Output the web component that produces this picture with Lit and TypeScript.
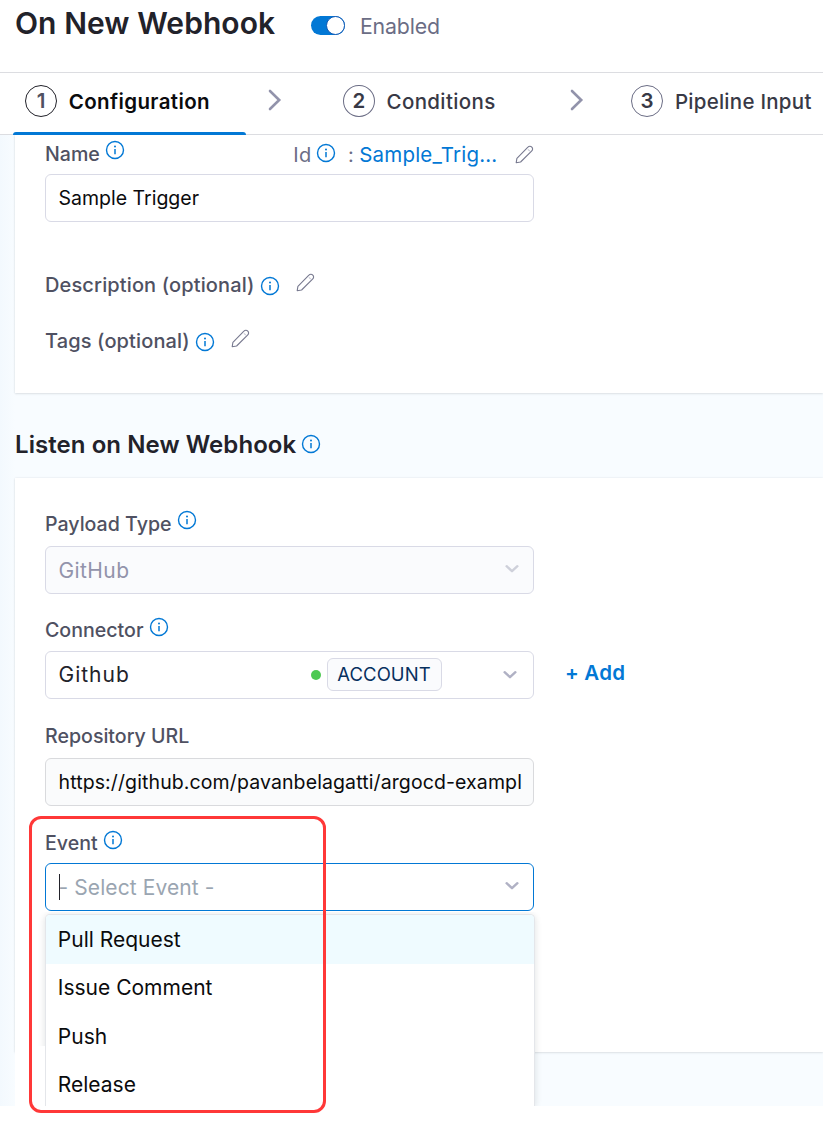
import { LitElement, html, css, svg } from "lit";
import { customElement, property } from "lit/decorators.js";
import { classMap } from "lit/directives/class-map.js";

@customElement("info-icon")
class InfoIcon extends LitElement {
  static styles = css`
    :host { display: block; flex: none; width: 20px; height: 20px; }
    svg { display: block; }
  `;
  render() {
    return html`<svg width="20" height="20" viewBox="0 0 20 20" fill="none">
      <circle cx="10" cy="10" r="8.5" stroke="#0278d5" stroke-width="1.4" />
      <circle cx="10" cy="6.5" r="1" fill="#0278d5" />
      <path d="M10 9v5.3" stroke="#0278d5" stroke-width="1.5" />
    </svg>`;
  }
}

@customElement("pencil-icon")
class PencilIcon extends LitElement {
  static styles = css`
    :host { display: block; flex: none; width: 19px; height: 19px; }
    svg { display: block; }
  `;
  render() {
    return html`<svg width="19" height="19" viewBox="0 0 19 19" fill="none" stroke="#77798f" stroke-width="1.1" stroke-linejoin="round">
      <path d="M1.2 17.7 1.9 13.4 12.9 2.2C14 1 15.7 1 16.8 2.1 17.9 3.2 17.9 4.8 16.8 5.9L5.6 17Z" />
      <path d="M12.9 4.4 14.8 6.2" stroke="#c9cad6" />
    </svg>`;
  }
}

@customElement("chevron-icon")
class ChevronIcon extends LitElement {
  @property() direction = "down";
  static styles = css`
    :host { display: block; flex: none; }
    svg { display: block; }
  `;
  render() {
    return this.direction === "down"
      ? html`<svg width="16" height="10" viewBox="0 0 16 10" fill="none" stroke="currentColor" stroke-width="2.4" stroke-linecap="round" stroke-linejoin="round">${svg`<path d="M2.6 2.2 8 7.2 13.4 2.2" />`}</svg>`
      : html`<svg width="14" height="22" viewBox="0 0 14 22" fill="none" stroke="currentColor" stroke-width="2.6" stroke-linecap="round" stroke-linejoin="miter">${svg`<path d="M2 2 11.2 11 2 20" />`}</svg>`;
  }
}

@customElement("app-root")
class AppRoot extends LitElement {
  static styles = css`
    :host {
      display: block; position: relative; width: 823px; height: 1128px; overflow: hidden;
      background: #fff; color: #0b0b0d; font: 400 20px/30px Inter, "Liberation Sans", sans-serif;
      white-space: nowrap;
    }
    * { box-sizing: border-box; }
    .header { display: flex; height: 73px; padding-left: 15px; border-bottom: 1px solid #dcdde1; align-items: flex-start; }
    .title { margin: 3px 0 0; width: 296.3px; font-size: 30px; line-height: 40px; font-weight: 600; color: #22222a; letter-spacing: 0.06px; }
    .toggle { width: 34px; height: 19px; margin-top: 16px; border-radius: 10px; background: #0278d5; display: flex; justify-content: flex-end; }
    .knob { width: 19px; height: 19px; border-radius: 50%; background: #fff; border: 1.4px solid #1259b4; }
    .enabled { margin: 11px 0 0 14.6px; font-size: 21.3px; color: #6b6d85; letter-spacing: -0.15px; }
    .steps { display: flex; height: 62px; border-bottom: 1px solid #dcdde1; color: #383946; font-size: 20.5px; font-weight: 500; }
    .step { display: flex; align-items: center; height: 56px; padding-left: 25px; }
    .step.current { position: relative; width: 246px; color: #0b0b0d; font-weight: 600; }
    .step.current::after { content: ""; position: absolute; left: 13px; right: 0; bottom: -6px; height: 3px; background: #0278d5; border-radius: 3px 3px 0 0; }
    .num { width: 32px; height: 32px; border: 1.3px solid #6b6d85; border-radius: 50%; display: grid; place-items: center; margin-right: 11.8px; font-weight: 600; color: #383946; letter-spacing: 0; }
    .current .num { border-color: #22222a; color: #4f5162; }
    .configuration { padding-top: 1px; letter-spacing: 0.37px; }
    .conditions { padding-top: 1px; letter-spacing: 0.36px; }
    .inputs { padding-top: 1px; letter-spacing: 0.26px; }
    .step.second { width: 152.5px; padding: 0; }
    .step.third { padding: 0; }
    .sep { margin: 16px 61.6px 0 21.5px; color: #9293ab; }
    .sep.last { margin: 16px 47.3px 0 74.2px; }
    .body { height: 971px; padding-left: 15px; background: linear-gradient(90deg, #f3f9fe, #f8fcff 15px); }
    .card { background: #fff; padding-left: 30px; box-shadow: 0 0 2px rgba(40, 41, 61, 0.1), 0 1px 2px rgba(96, 97, 112, 0.13); }
    .overview { height: 258px; padding-top: 4px; clip-path: inset(0 0 -4px -4px); }
    .listen { height: 574px; padding-top: 30px; }
    .label { display: flex; align-items: center; height: 30px; font-size: 19.6px; font-weight: 500; color: #4f5162; }
    .label info-icon { margin: -6px 0 0 5px; }
    .name-row { width: 489px; margin-bottom: 5px; }
    .name-row info-icon { margin-top: -8px; }
    .id { display: flex; align-items: center; margin-left: auto; padding-top: 2px; font-size: 20px; font-weight: 400; color: #6b6d85; letter-spacing: 0.3px; }
    .id info-icon { margin: -4px 0 0 5px; }
    .colon { margin-left: 11.5px; }
    .id-value { margin-left: 5.2px; font-size: 20.5px; color: #0278d5; letter-spacing: 0.18px; }
    .id pencil-icon { margin: -2px 0 0 17.6px; }
    .wide { font-size: 20px; letter-spacing: 0.13px; }
    .wide info-icon { margin: 1px 0 0 5.6px; }
    .wide pencil-icon { margin: -6px 0 0 15.8px; }
    .description { margin-top: 48px; }
    .tags { margin-top: 26px; }
    .section { display: flex; align-items: center; height: 85px; padding-top: 18px; margin: 0; font-size: 24px; font-weight: 600; color: #22222a; letter-spacing: 0.07px; }
    .section info-icon { margin: -2px 0 0 5px; }
    .field { display: flex; align-items: center; width: 489px; height: 48px; padding: 0 14px 0 12.5px; border: 1px solid #d9dae6; border-radius: 6px; background: #fff; font-size: 19.5px; }
    .select { font-size: 21px; color: #22222a; }
    .select chevron-icon { margin-left: auto; color: #b0b1c4; }
    .disabled { padding-top: 2px; padding-right: 13.3px; background: #fafbfd; color: #9293ab; letter-spacing: 0.4px; }
    .disabled chevron-icon { color: #ced0da; margin-top: -5px; }
    .connected { letter-spacing: 1px; }
    .connected chevron-icon { margin-right: 1.2px; margin-left: 60.3px; }
    .readonly { background: #fafbfc; border-color: #d9dadd; letter-spacing: 0.11px; overflow: hidden; }
    .payload-label { margin-bottom: 8px; }
    .payload-label span { padding-top: 1px; }
    .connector-label { margin: 21px 0 6px; }
    .repo-label { margin: 22px 0 7px; }
    .event-label { margin: 22px 0 5px; }
    .line { display: flex; align-items: center; }
    .dot { width: 10px; height: 10px; border-radius: 50%; background: #4dc952; margin-left: auto; margin-right: 6px; }
    .scope { width: 115px; height: 33px; margin-top: -1px; line-height: 31px; text-align: center; border: 1px solid #d9dae6; border-radius: 6px; background: #fafbfd; color: #07305f; font-size: 18.5px; letter-spacing: 0.05px; }
    .add { margin: -5px 0 0 31px; font-size: 20.5px; font-weight: 600; color: #0278d5; letter-spacing: 0.2px; }
    .event { position: relative; padding-right: 13.2px; border: 1.4px solid #0278d5; }
    .event chevron-icon { margin-top: -3px; }
    .placeholder { padding-top: 1px; color: #9aa5b1; letter-spacing: 0.1px; }
    .caret { position: absolute; left: 12.5px; top: 10px; width: 1.5px; height: 26px; background: #22222a; }
    .menu { position: absolute; left: -1px; top: 50px; width: 489.5px; height: 192px; margin: 0; padding: 0; list-style: none; background: #fff; border: 1px solid #e4e6ea; border-bottom: 0; border-radius: 5px 5px 0 0; box-shadow: 0 1px 7px rgba(16, 22, 26, 0.13); clip-path: inset(-2px -8px 0 -8px); color: #0b0b0d; }
    .option { height: 48.3px; line-height: 50px; padding-left: 11.8px; }
    .option.active { height: 49px; margin-bottom: -0.7px; background: #effbff; border-radius: 4px 4px 0 0; }
    .gutter { position: absolute; left: 15px; top: 1046px; width: 30px; height: 60px; background: #fff; z-index: 2; }
    .highlight { position: absolute; left: 29px; top: 816px; width: 297px; height: 297px; border: 3px solid #ff3838; border-radius: 12px; z-index: 3; }
  `;

  private options = ["Pull Request", "Issue Comment", "Push", "Release"];

  render() {
    return html`
      <div class="header">
        <h1 class="title">On New Webhook</h1>
        <div class="toggle"><div class="knob"></div></div>
        <div class="enabled">Enabled</div>
      </div>
      <div class="steps">
        <div class="step current"><span class="num">1</span><span class="configuration">Configuration</span></div>
        <chevron-icon class="sep" direction="right"></chevron-icon>
        <div class="step second"><span class="num">2</span><span class="conditions">Conditions</span></div>
        <chevron-icon class="sep last" direction="right"></chevron-icon>
        <div class="step third"><span class="num">3</span><span class="inputs">Pipeline Input</span></div>
      </div>
      <div class="body">
        <div class="card overview">
          <div class="label name-row">
            Name<info-icon></info-icon>
            <div class="id">Id<info-icon></info-icon><span class="colon">:</span><span class="id-value">Sample_Trig...</span><pencil-icon></pencil-icon></div>
          </div>
          <div class="field">Sample Trigger</div>
          <div class="label wide description">Description (optional)<info-icon></info-icon><pencil-icon></pencil-icon></div>
          <div class="label wide tags">Tags (optional)<info-icon></info-icon><pencil-icon></pencil-icon></div>
        </div>
        <h2 class="section">Listen on New Webhook<info-icon></info-icon></h2>
        <div class="card listen">
          <div class="label payload-label"><span>Payload Type</span><info-icon></info-icon></div>
          <div class="field select disabled">GitHub<chevron-icon></chevron-icon></div>
          <div class="label connector-label">Connector<info-icon></info-icon></div>
          <div class="line">
            <div class="field select connected">Github<span class="dot"></span><span class="scope">ACCOUNT</span><chevron-icon></chevron-icon></div>
            <div class="add">+ Add</div>
          </div>
          <div class="label repo-label">Repository URL</div>
          <div class="field readonly">https://github.com/pavanbelagatti/argocd-exampl</div>
          <div class="label event-label">Event<info-icon></info-icon></div>
          <div class="field select event">
            <span class="placeholder">- Select Event -</span><span class="caret"></span>
            <chevron-icon></chevron-icon>
            <ul class="menu">
              ${this.options.map((name, i) => html`<li class=${classMap({ option: true, active: i === 0 })}>${name}</li>`)}
            </ul>
          </div>
        </div>
      </div>
      <div class="gutter"></div>
      <div class="highlight"></div>
    `;
  }
}
